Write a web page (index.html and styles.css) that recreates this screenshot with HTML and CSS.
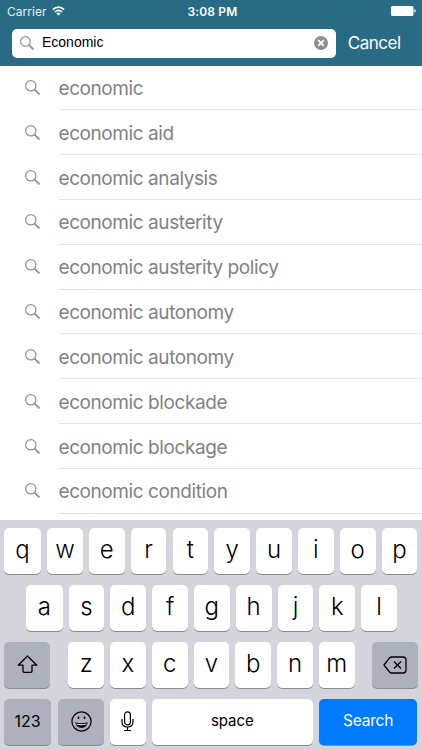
FILE: index.html
```html
<!DOCTYPE html>
<html lang="en">
<head>
<meta charset="utf-8">
<title>Search</title>
<link rel="stylesheet" href="styles.css">
</head>
<body>
<svg width="0" height="0" class="defs" aria-hidden="true">
  <symbol id="lens" viewBox="0 0 16 16"><circle cx="6.200" cy="6.200" r="5.500" fill="none" stroke="currentColor" stroke-width="1.300"/><path d="M10.200 10.200L15.400 15.400" stroke="currentColor" stroke-width="2"/></symbol>
</svg>
<header class="header">
  <div class="status">
    <div class="carrier"><span>Carrier</span>
      <svg class="wifi" viewBox="0 0 13 10"><g fill="none" stroke="currentColor" stroke-width="1.600"><path d="M.8 3.700Q6.500 -1.500 12.200 3.700"/><path d="M2.900 6Q6.500 2.900 10.100 6"/></g><path fill="currentColor" d="M4.300 7.400Q6.500 5.600 8.700 7.400L6.500 9.600Z"/></svg>
    </div>
    <div class="time">3:08 PM</div>
    <svg class="battery" viewBox="0 0 25 10"><rect width="22.500" height="10" rx="1.500" fill="currentColor"/><path d="M23.300 3.300Q24.700 3.600 24.700 5T23.300 6.700Z" fill="currentColor"/></svg>
  </div>
  <div class="bar">
    <div class="field">
      <svg class="field-lens"><use href="#lens"/></svg>
      <span class="query">Economic</span>
      <svg class="clear" viewBox="0 0 14 14"><circle cx="7" cy="7" r="7" fill="#8e8e93"/><path d="M4.200 4.200L9.800 9.800M9.800 4.200L4.200 9.800" stroke="#fff" stroke-width="1.700"/></svg>
    </div>
    <span class="cancel">Cancel</span>
  </div>
</header>
<main class="list">
  <div class="row"><svg class="lens"><use href="#lens"/></svg><div class="label"><span>economic</span></div></div>
  <div class="row"><svg class="lens"><use href="#lens"/></svg><div class="label"><span>economic aid</span></div></div>
  <div class="row"><svg class="lens"><use href="#lens"/></svg><div class="label"><span>economic analysis</span></div></div>
  <div class="row"><svg class="lens"><use href="#lens"/></svg><div class="label"><span>economic austerity</span></div></div>
  <div class="row"><svg class="lens"><use href="#lens"/></svg><div class="label"><span>economic austerity policy</span></div></div>
  <div class="row"><svg class="lens"><use href="#lens"/></svg><div class="label"><span>economic autonomy</span></div></div>
  <div class="row"><svg class="lens"><use href="#lens"/></svg><div class="label"><span>economic autonomy</span></div></div>
  <div class="row"><svg class="lens"><use href="#lens"/></svg><div class="label"><span>economic blockade</span></div></div>
  <div class="row"><svg class="lens"><use href="#lens"/></svg><div class="label"><span>economic blockage</span></div></div>
  <div class="row"><svg class="lens"><use href="#lens"/></svg><div class="label"><span>economic condition</span></div></div>
</main>
<section class="keyboard">
  <div class="keys first"><span class="key">q</span><span class="key">w</span><span class="key">e</span><span class="key">r</span><span class="key">t</span><span class="key">y</span><span class="key">u</span><span class="key">i</span><span class="key">o</span><span class="key">p</span></div>
  <div class="keys second"><span class="key">a</span><span class="key">s</span><span class="key">d</span><span class="key">f</span><span class="key">g</span><span class="key">h</span><span class="key">j</span><span class="key">k</span><span class="key">l</span></div>
  <div class="keys third">
    <span class="key dark shift"><svg width="21" height="19" viewBox="0 0 21 19"><path d="M10.500 1L19.800 10.200H15V16.200Q15 17.300 13.900 17.300H7.100Q6 17.300 6 16.200V10.200H1.200Z" fill="none" stroke="#000" stroke-width="1.300" stroke-linejoin="round"/></svg></span>
    <div class="letters"><span class="key">z</span><span class="key">x</span><span class="key">c</span><span class="key">v</span><span class="key">b</span><span class="key">n</span><span class="key">m</span></div>
    <span class="key dark delete"><svg width="24" height="18" viewBox="0 0 24 18"><path d="M8.500 1H20Q23 1 23 4V14Q23 17 20 17H8.500Q7.500 17 6.500 16L1 9L6.500 2Q7.500 1 8.500 1Z" fill="none" stroke="#000" stroke-width="1.300" stroke-linejoin="round"/><path d="M11 5.500L18 12.500M18 5.500L11 12.500" stroke="#000" stroke-width="1.300"/></svg></span>
  </div>
  <div class="keys fourth">
    <span class="key dark word numbers">123</span>
    <span class="key dark emoji"><svg width="21" height="21" viewBox="0 0 21 21"><circle cx="10.500" cy="10.500" r="9.600" fill="none" stroke="#000" stroke-width="1.200"/><ellipse cx="7.500" cy="6.800" rx=".9" ry="1.200"/><ellipse cx="13.500" cy="6.800" rx=".9" ry="1.200"/><path d="M4.200 11.300Q10.500 13 16.800 11.300Q15.500 17 10.500 17T4.200 11.300Z"/><path d="M5.300 12.400Q10.500 13.700 15.700 12.400L15.200 13.700Q10.500 14.600 5.800 13.700Z" fill="#d5d8de"/></svg></span>
    <span class="key mic"><svg width="13" height="21" viewBox="0 0 13 21"><g fill="none" stroke="#000" stroke-width="1.200"><rect x="3.600" y=".8" width="5.800" height="13" rx="2.900"/><path d="M1 8V11Q1 16 6.500 16T12 11V8M6.500 16V19.500M3 19.500H10"/></g></svg></span>
    <span class="key word space">space</span>
    <span class="key word search">Search</span>
  </div>
</section>
</body>
</html>
```
FILE: styles.css
```css
* { box-sizing: border-box; }
body {
  margin: 0;
  width: 422px;
  height: 750px;
  overflow: hidden;
  display: flex;
  flex-direction: column;
  background: #fff;
  font-family: Inter, "Liberation Sans", sans-serif;
}
.defs { display: none; }
.header { height: 65.5px; flex: none; background: #296b84; color: #fff; }
.status {
  height: 22px;
  padding: 0 6px 0 7px;
  display: grid;
  grid-template-columns: 1fr auto 1fr;
  align-items: center;
  font-size: 12px;
}
.carrier { display: flex; align-items: center; gap: 5px; letter-spacing: .05px; color: #e3f0f4; }
.wifi { width: 13px; height: 10px; color: #fff; }
.time { font-weight: 600; letter-spacing: .15px; padding-left: 2px; }
.battery { width: 25px; height: 10px; justify-self: end; }
.bar { display: flex; align-items: center; padding: 6.5px 0 0 12.2px; }
.field {
  width: 324px;
  height: 29px;
  padding: 0 8px;
  display: flex;
  align-items: center;
  border-radius: 5px;
  background: #fff;
}
.field-lens { width: 14px; height: 14px; color: #8e8e93; }
.query { flex: 1; margin-left: 7.8px; padding-bottom: 2px; font: 14px "Liberation Sans", sans-serif; color: #000; }
.clear { width: 14px; height: 14px; }
.cancel { margin-left: 11.5px; padding-bottom: 1px; font-size: 17px; letter-spacing: -.45px; }
.list { height: 454px; flex: none; overflow: hidden; }
.row { height: 44.840px; padding-left: 25px; display: flex; align-items: center; }
.lens { width: 15px; height: 15px; margin: 0 18.5px 1px 0; color: #929292; }
.label {
  flex: 1;
  height: 100%;
  display: flex;
  align-items: center;
  border-bottom: 1px solid #e5e5e7;
  padding-top: 2px;
  font-size: 19px;
  letter-spacing: -.42px;
  color: #828282;
}
.keyboard {
  flex: 1;
  padding: 8px 4.5px 0 4px;
  display: flex;
  flex-direction: column;
  gap: 11px;
  background: #d2d5dc;
}
.keys { display: flex; justify-content: space-between; }
.key {
  width: 35.8px;
  height: 46px;
  flex: none;
  display: flex;
  align-items: center;
  justify-content: center;
  padding-bottom: 3px;
  border-radius: 5px;
  background: #fff;
  box-shadow: 0 1px 0 #898b8f;
  color: #000;
  font-size: 24px;
  font-weight: 300;
}
.first .key:first-child { width: 37px; }
.second { padding: 0 20.5px 0 22px; }
.second .key:first-child { width: 36.5px; }
.letters { width: 286.300px; display: flex; justify-content: space-between; }
.dark { background: #acb1bd; }
.shift, .delete { width: 46px; padding-bottom: 0; }
.delete { width: 45.5px; }
.third { justify-content: flex-start; }
.shift { margin-right: 18.300px; }
.delete { margin-left: auto; }
.word { font-size: 15.500px; font-weight: 400; letter-spacing: -.2px; }
.numbers { width: 47px; padding-bottom: 1px; font-size: 16px; letter-spacing: 0; }
.emoji { width: 46px; padding-bottom: 0; }
.mic { padding-bottom: 0; }
.space { width: 161px; font-size: 15px; letter-spacing: -.05px; }
.search { width: 98.500px; background: #007aff; color: #fff; }
.fourth { justify-content: flex-start; gap: 6px; }
.emoji { margin-left: 1px; }
```
